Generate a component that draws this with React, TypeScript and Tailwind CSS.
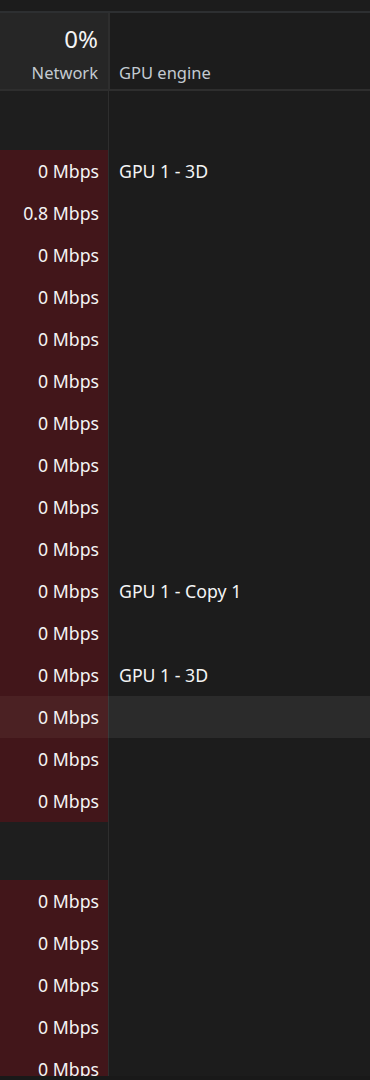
import React from "react";

const rows1: { v: string; g?: string; hl?: boolean }[] = [
  { v: "0 Mbps", g: "GPU 1 - 3D" },
  { v: "0.8 Mbps" },
  { v: "0 Mbps" },
  { v: "0 Mbps" },
  { v: "0 Mbps" },
  { v: "0 Mbps" },
  { v: "0 Mbps" },
  { v: "0 Mbps" },
  { v: "0 Mbps" },
  { v: "0 Mbps" },
  { v: "0 Mbps", g: "GPU 1 - Copy 1" },
  { v: "0 Mbps" },
  { v: "0 Mbps", g: "GPU 1 - 3D" },
  { v: "0 Mbps", hl: true },
  { v: "0 Mbps" },
  { v: "0 Mbps" },
];

const rows2 = ["0 Mbps", "0 Mbps", "0 Mbps", "0 Mbps", "0 Mbps"];

function Row({ v, g, hl }: { v: string; g?: string; hl?: boolean }) {
  return (
    <div className={`flex h-[42px] shrink-0 ${hl ? "bg-[#2b2b2b]" : ""}`}>
      <div
        className={`flex w-[108px] shrink-0 items-center justify-end pr-[9px] text-[#f4f4f4] ${
          hl ? "bg-[#4b2123]" : "bg-[#42161a]"
        }`}
      >
        {v}
      </div>
      <div className={`w-[1px] shrink-0 ${hl ? "bg-[#3a3a3a]" : "bg-[#2e2e2e]"}`} />
      <div className="flex flex-1 items-center pl-[10px] text-[#f4f4f4]">{g}</div>
    </div>
  );
}

function Gap({ h }: { h: string }) {
  return (
    <div className={`flex shrink-0 ${h}`}>
      <div className="w-[108px] shrink-0 bg-[#1e1e1e]" />
      <div className="w-[1px] shrink-0 bg-[#2e2e2e]" />
      <div className="flex-1" />
    </div>
  );
}

export default function App() {
  return (
    <div
      className="flex h-[1080px] w-[370px] flex-col overflow-hidden bg-[#1c1c1c] text-[17.7px] leading-[24px]"
      style={{ fontFamily: '"Noto Sans", "Open Sans", sans-serif' }}
    >
      <div className="h-[11px] shrink-0 bg-[#1c1c1c]" />
      <div className="h-[2px] shrink-0 bg-[#2d2f31]" />
      <div className="flex h-[76px] shrink-0">
        <div className="flex w-[108px] shrink-0 flex-col items-end bg-[#262626] pr-[10px]">
          <div className="mt-[10px] text-[24px] leading-[32px] text-[#f4f4f4]">0%</div>
          <div className="mt-[7px] text-[16.5px] leading-[22px] text-[#c3cad1]">Network</div>
        </div>
        <div className="w-[2px] shrink-0 bg-[#2e2e2e]" />
        <div className="flex flex-1 flex-col justify-end pb-[5px] pl-[9px] text-[16.5px] leading-[22px] text-[#c3cad1]">
          GPU engine
        </div>
      </div>
      <div className="h-[2px] shrink-0 bg-[#2e2e2e]" />
      <div className="flex flex-1 flex-col overflow-hidden">
        <Gap h="h-[59px]" />
        {rows1.map((r, i) => (
          <Row key={i} {...r} />
        ))}
        <Gap h="h-[58px]" />
        {rows2.map((v, i) => (
          <Row key={"b" + i} v={v} />
        ))}
      </div>
      <div className="h-[4px] shrink-0 bg-[#191919]" />
    </div>
  );
}
